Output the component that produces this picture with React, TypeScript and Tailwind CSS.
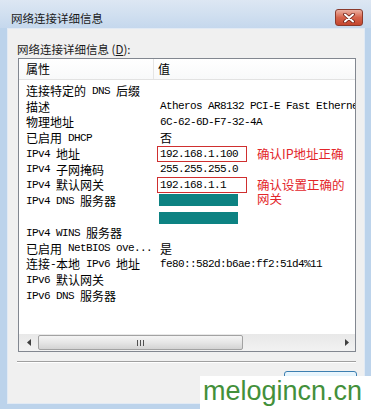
import React from "react";

function M({ s }: { s: string }) {
  const parts = s.split(/([\x00-\x7f]+)/).filter(Boolean);
  return (
    <>
      {parts.map((p, i) =>
        /^[\x00-\x7f]+$/.test(p) ? (
          <span
            key={i}
            className="font-['Liberation_Mono',monospace] text-[11px] tracking-[-0.6px] whitespace-pre"
          >
            {p}
          </span>
        ) : (
          <span key={i} className="text-[12px] whitespace-pre">
            {p}
          </span>
        )
      )}
    </>
  );
}

const Mono = ({ s }: { s: string }) => (
  <span className="font-['Liberation_Mono',monospace] text-[11px] tracking-[-0.6px] whitespace-pre">
    {s}
  </span>
);

type Row = { k: string; v?: React.ReactNode };

const rows: Row[] = [
  { k: "连接特定的 DNS 后缀" },
  {
    k: "描述",
    v: (
      <div className="pl-[6px] flex items-center">
        <Mono s="Atheros AR8132 PCI-E Fast Ethernet Controller" />
      </div>
    ),
  },
  {
    k: "物理地址",
    v: (
      <div className="pl-[6px] flex items-center">
        <Mono s="6C-62-6D-F7-32-4A" />
      </div>
    ),
  },
  {
    k: "已启用 DHCP",
    v: <div className="pl-[6px] text-[12px]">否</div>,
  },
  {
    k: "IPv4 地址",
    v: (
      <>
        <div className="ml-[3px] w-[90px] h-[16px] pl-[2px] border border-[#cf2f2f] flex items-center">
          <Mono s="192.168.1.100" />
        </div>
        <div className="ml-[10px] text-[12.5px] leading-[14px] text-[#e3262b] whitespace-nowrap">
          确认IP地址正确
        </div>
      </>
    ),
  },
  {
    k: "IPv4 子网掩码",
    v: (
      <div className="pl-[6px] flex items-center">
        <Mono s="255.255.255.0" />
      </div>
    ),
  },
  {
    k: "IPv4 默认网关",
    v: (
      <>
        <div className="ml-[3px] w-[90px] h-[16px] pl-[2px] border border-[#cf2f2f] flex items-center">
          <Mono s="192.168.1.1" />
        </div>
        <div className="self-start ml-[10px] text-[12.5px] leading-[14px] text-[#e3262b] whitespace-nowrap">
          确认设置正确的
          <br />
          网关
        </div>
      </>
    ),
  },
  {
    k: "IPv4 DNS 服务器",
    v: <div className="self-start mt-[1px] ml-[5px] w-[79px] h-[12px] bg-[#0d8282]" />,
  },
  {
    k: "",
    v: <div className="self-start mt-[3px] ml-[5px] w-[79px] h-[12px] bg-[#0d8282]" />,
  },
  { k: "IPv4 WINS 服务器" },
  {
    k: "已启用 NetBIOS ove...",
    v: <div className="pl-[6px] text-[12px]">是</div>,
  },
  {
    k: "连接-本地 IPv6 地址",
    v: (
      <div className="pl-[6px] flex items-center">
        <Mono s="fe80::582d:b6ae:ff2:51d4%11" />
      </div>
    ),
  },
  { k: "IPv6 默认网关" },
  { k: "IPv6 DNS 服务器" },
];

export default function App() {
  return (
    <div className="relative w-[371px] h-[409px] bg-[#bcd3eb] flex flex-col overflow-hidden font-['Noto_Sans_CJK_SC',sans-serif] text-black">
      {/* Title bar */}
      <div className="h-[28px] shrink-0 flex items-start justify-between bg-gradient-to-b from-[#dde7f3] to-[#c5d8ed]">
        <span className="ml-[11px] mt-[10px] text-[11.5px] leading-[16px] text-[#1a1a1a]">
          网络连接详细信息
        </span>
        <div className="mt-[9px] mr-[8px] w-[28px] h-[17px] rounded-[3px] border border-[#8a3a2c] bg-gradient-to-b from-[#eab0a2] via-[#d5634b] to-[#c4452e] flex items-center justify-center">
          <svg width="12" height="10" viewBox="0 0 12 10">
            <path d="M2 1.5 L10 8.5 M10 1.5 L2 8.5" stroke="#6b1c12" strokeWidth="3.6" strokeLinecap="round" />
            <path d="M2 1.5 L10 8.5 M10 1.5 L2 8.5" stroke="#ffffff" strokeWidth="2" strokeLinecap="round" />
          </svg>
        </div>
      </div>

      {/* Client area */}
      <div className="flex-1 ml-[7px] mr-[6px] mb-[5px] border border-[#e2eaf4] bg-[#f0f0f0] flex flex-col">
        <div className="ml-[9px] mt-[12px] text-[11.5px] leading-[16px] text-[#1a1a1a]">
          网络连接详细信息 (<u>D</u>):
        </div>

        {/* List */}
        <div className="ml-[10px] mr-[8px] mt-[1px] h-[294px] shrink-0 border border-[#828790] bg-white flex flex-col">
          <div className="h-[21px] shrink-0 flex border-b border-[#e2e2e2] bg-gradient-to-b from-white to-[#f8f9fa]">
            <div className="w-[135px] pl-[7px] flex items-center border-r border-[#e5e5e5] text-[12px]">
              属性
            </div>
            <div className="flex-1 pl-[4px] flex items-center text-[12px]">值</div>
          </div>

          <div className="flex-1 pt-[3px] flex flex-col overflow-hidden">
            {rows.map((r, i) => (
              <div key={i} className="h-[15.77px] shrink-0 flex">
                <div className="w-[135px] shrink-0 pl-[7px] flex items-center whitespace-nowrap">
                  <M s={r.k} />
                </div>
                <div className="flex-1 min-w-0 flex items-center whitespace-nowrap">{r.v}</div>
              </div>
            ))}
          </div>

          {/* Horizontal scrollbar */}
          <div className="h-[17px] shrink-0 flex items-center bg-gradient-to-b from-[#e8e8e8] to-[#f2f2f2]">
            <div className="w-[19px] h-full flex items-center justify-center">
              <svg width="4" height="7" viewBox="0 0 4 7">
                <path d="M4 0 L0 3.5 L4 7Z" fill="#3f3f3f" />
              </svg>
            </div>
            <div className="flex-1 h-full flex items-center">
              <div className="w-[205px] h-[15px] rounded-[2px] border border-[#a2a2a2] bg-gradient-to-b from-[#f4f4f4] via-[#e6e6e6] to-[#d3d3d3] flex items-center justify-center">
                <svg width="7" height="6" viewBox="0 0 7 6">
                  <rect x="0" y="0" width="1" height="6" fill="#505050" />
                  <rect x="3" y="0" width="1" height="6" fill="#505050" />
                  <rect x="6" y="0" width="1" height="6" fill="#505050" />
                </svg>
              </div>
            </div>
            <div className="w-[17px] h-full flex items-center justify-center">
              <svg width="4" height="7" viewBox="0 0 4 7">
                <path d="M0 0 L4 3.5 L0 7Z" fill="#3f3f3f" />
              </svg>
            </div>
          </div>
        </div>

        {/* Separator */}
        <div className="ml-[9px] mr-[8px] mt-[9px] h-[2px] shrink-0 border-t border-b border-t-[#a0a0a0] border-b-white" />

        {/* Button */}
        <div className="self-end mr-[7px] mt-[8px] w-[73px] h-[23px] shrink-0 rounded-[3px] border border-[#3c7fb1] bg-gradient-to-b from-[#eaf6fd] via-[#d9f0fc] to-[#bee6fd] flex items-center justify-center text-[12px] text-[#1a1a1a]">
          关闭(<u>C</u>)
        </div>
      </div>

      {/* Watermark overlay */}
      <div className="absolute left-[200px] top-[376px] w-[171px] h-[33px] bg-white pl-[3px]">
        <span className="font-['Liberation_Sans',sans-serif] text-[27px] leading-[30px] text-[#43903a] whitespace-nowrap">
          melogincn.cn
        </span>
      </div>
    </div>
  );
}
